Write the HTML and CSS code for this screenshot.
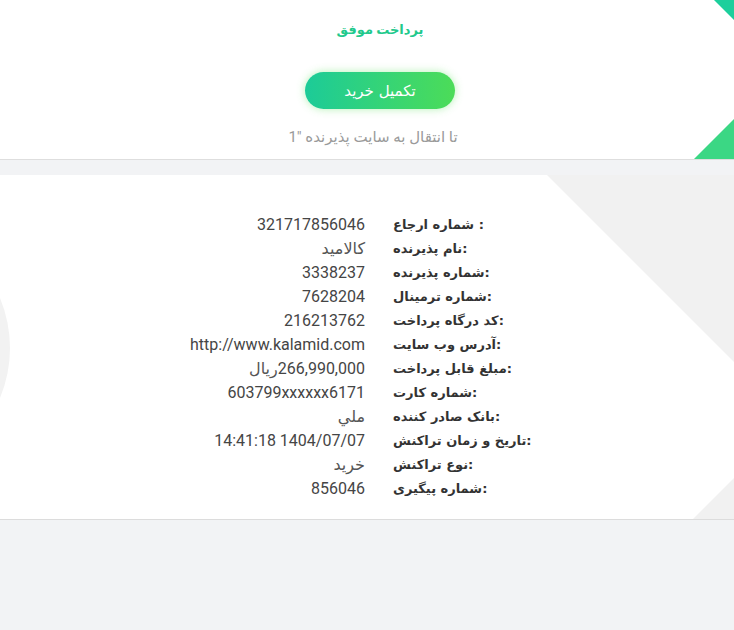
FILE: index.html
```html
<!DOCTYPE html>
<html lang="fa">
<head>
  <meta charset="UTF-8" />
  <meta name="viewport" content="width=device-width, initial-scale=1" />
  <title>پرداخت موفق</title>
  <link rel="stylesheet" href="styles.css">
</head>
<body>
  <div class="status-card">
    <h1 class="status-title">پرداخت موفق</h1>
    <button class="finish-btn">تکمیل خرید</button>
    <p class="redirect-note">تا انتقال به سایت پذیرنده "<span id="counter">1</span></p>
  </div>

  <div class="receipt-card">
    <div class="receipt">
      <div class="value">321717856046</div>
      <div class="label">شماره ارجاع :</div>

      <div class="value fa">کالامید</div>
      <div class="label">نام پذیرنده:</div>

      <div class="value">3338237</div>
      <div class="label">شماره پذیرنده:</div>

      <div class="value">7628204</div>
      <div class="label">شماره ترمینال:</div>

      <div class="value">216213762</div>
      <div class="label">کد درگاه پرداخت:</div>

      <div class="value">http://www.kalamid.com</div>
      <div class="label">آدرس وب سایت:</div>

      <div class="value"><span class="fa">ریال</span>&lrm;266,990,000</div>
      <div class="label">مبلغ قابل پرداخت:</div>

      <div class="value">603799xxxxxx6171</div>
      <div class="label">شماره کارت:</div>

      <div class="value fa">ملي</div>
      <div class="label">بانک صادر کننده:</div>

      <div class="value">14:41:18 1404/07/07</div>
      <div class="label">تاریخ و زمان تراکنش:</div>

      <div class="value fa">خرید</div>
      <div class="label">نوع تراکنش:</div>

      <div class="value">856046</div>
      <div class="label">شماره پیگیری:</div>
    </div>
  </div>
</body>
</html>
```

FILE: styles.css
```css
body {
  margin: 0;
  background: #f2f3f5;
  font-family: 'Roboto', 'DejaVu Sans', sans-serif;
  color: #444;
}

/* بالای صفحه */
.status-card {
  position: relative;
  overflow: hidden;
  background: #fff;
  border-bottom: 1px solid #dedede;
  height: 159px;
  padding-left: 26px;
  display: flex;
  flex-direction: column;
  align-items: center;
}
.status-card::before {
  content: '';
  position: absolute;
  top: 0;
  right: 0;
  width: 20px;
  height: 20px;
  background: #1ccf9c;
  clip-path: polygon(0 0, 100% 0, 100% 100%);
}
.status-card::after {
  content: '';
  position: absolute;
  bottom: 0;
  right: 0;
  width: 40px;
  height: 40px;
  background: #3bd784;
  clip-path: polygon(100% 0, 100% 100%, 0 100%);
}
.status-title {
  margin: 20px 0 0;
  font-size: 13px;
  line-height: 20px;
  font-weight: bold;
  color: #22c98c;
}
.finish-btn {
  margin-top: 32px;
  width: 150px;
  height: 37px;
  border: none;
  border-radius: 19px;
  background: linear-gradient(90deg, #1ccb98, #4cdc58);
  box-shadow: 0 0 8px rgba(90, 225, 90, 0.45);
  color: #fff;
  font-family: 'DejaVu Sans', sans-serif;
  font-size: 15px;
  cursor: pointer;
}
.redirect-note {
  margin: 19px 14px 0 0;
  font-size: 15px;
  line-height: 18px;
  color: #9a9a9a;
}

/* رسید */
.receipt-card {
  position: relative;
  overflow: hidden;
  margin-top: 15px;
  background: #fff;
  border-bottom: 1px solid #dcdcdc;
  padding: 38px 191px 18px 0;
}
.receipt-card::before {
  content: '';
  position: absolute;
  top: 0;
  right: 0;
  width: 187px;
  height: 187px;
  background: #f1f1f1;
  clip-path: polygon(0 0, 100% 0, 100% 100%);
}
.receipt-card::after {
  content: '';
  position: absolute;
  bottom: 0;
  right: 0;
  width: 41px;
  height: 41px;
  background: #f1f1f1;
  clip-path: polygon(100% 0, 100% 100%, 0 100%);
}
.receipt {
  position: relative;
  z-index: 1;
  display: grid;
  grid-template-columns: 1fr 150px;
  column-gap: 28px;
}
.receipt::before {
  content: '';
  position: absolute;
  z-index: -1;
  left: -250px;
  top: 5px;
  width: 260px;
  height: 260px;
  border-radius: 50%;
  background: #f2f2f2;
}
.value, .label {
  white-space: nowrap;
  line-height: 24px;
}
.value {
  text-align: right;
  font-size: 16px;
  color: #454545;
}
.value.fa, .value .fa {
  font-family: 'DejaVu Sans', sans-serif;
  font-size: 16px;
  color: #555;
}
.label {
  text-align: left;
  font-family: 'DejaVu Sans', sans-serif;
  font-size: 13px;
  font-weight: bold;
  color: #333;
}
```
